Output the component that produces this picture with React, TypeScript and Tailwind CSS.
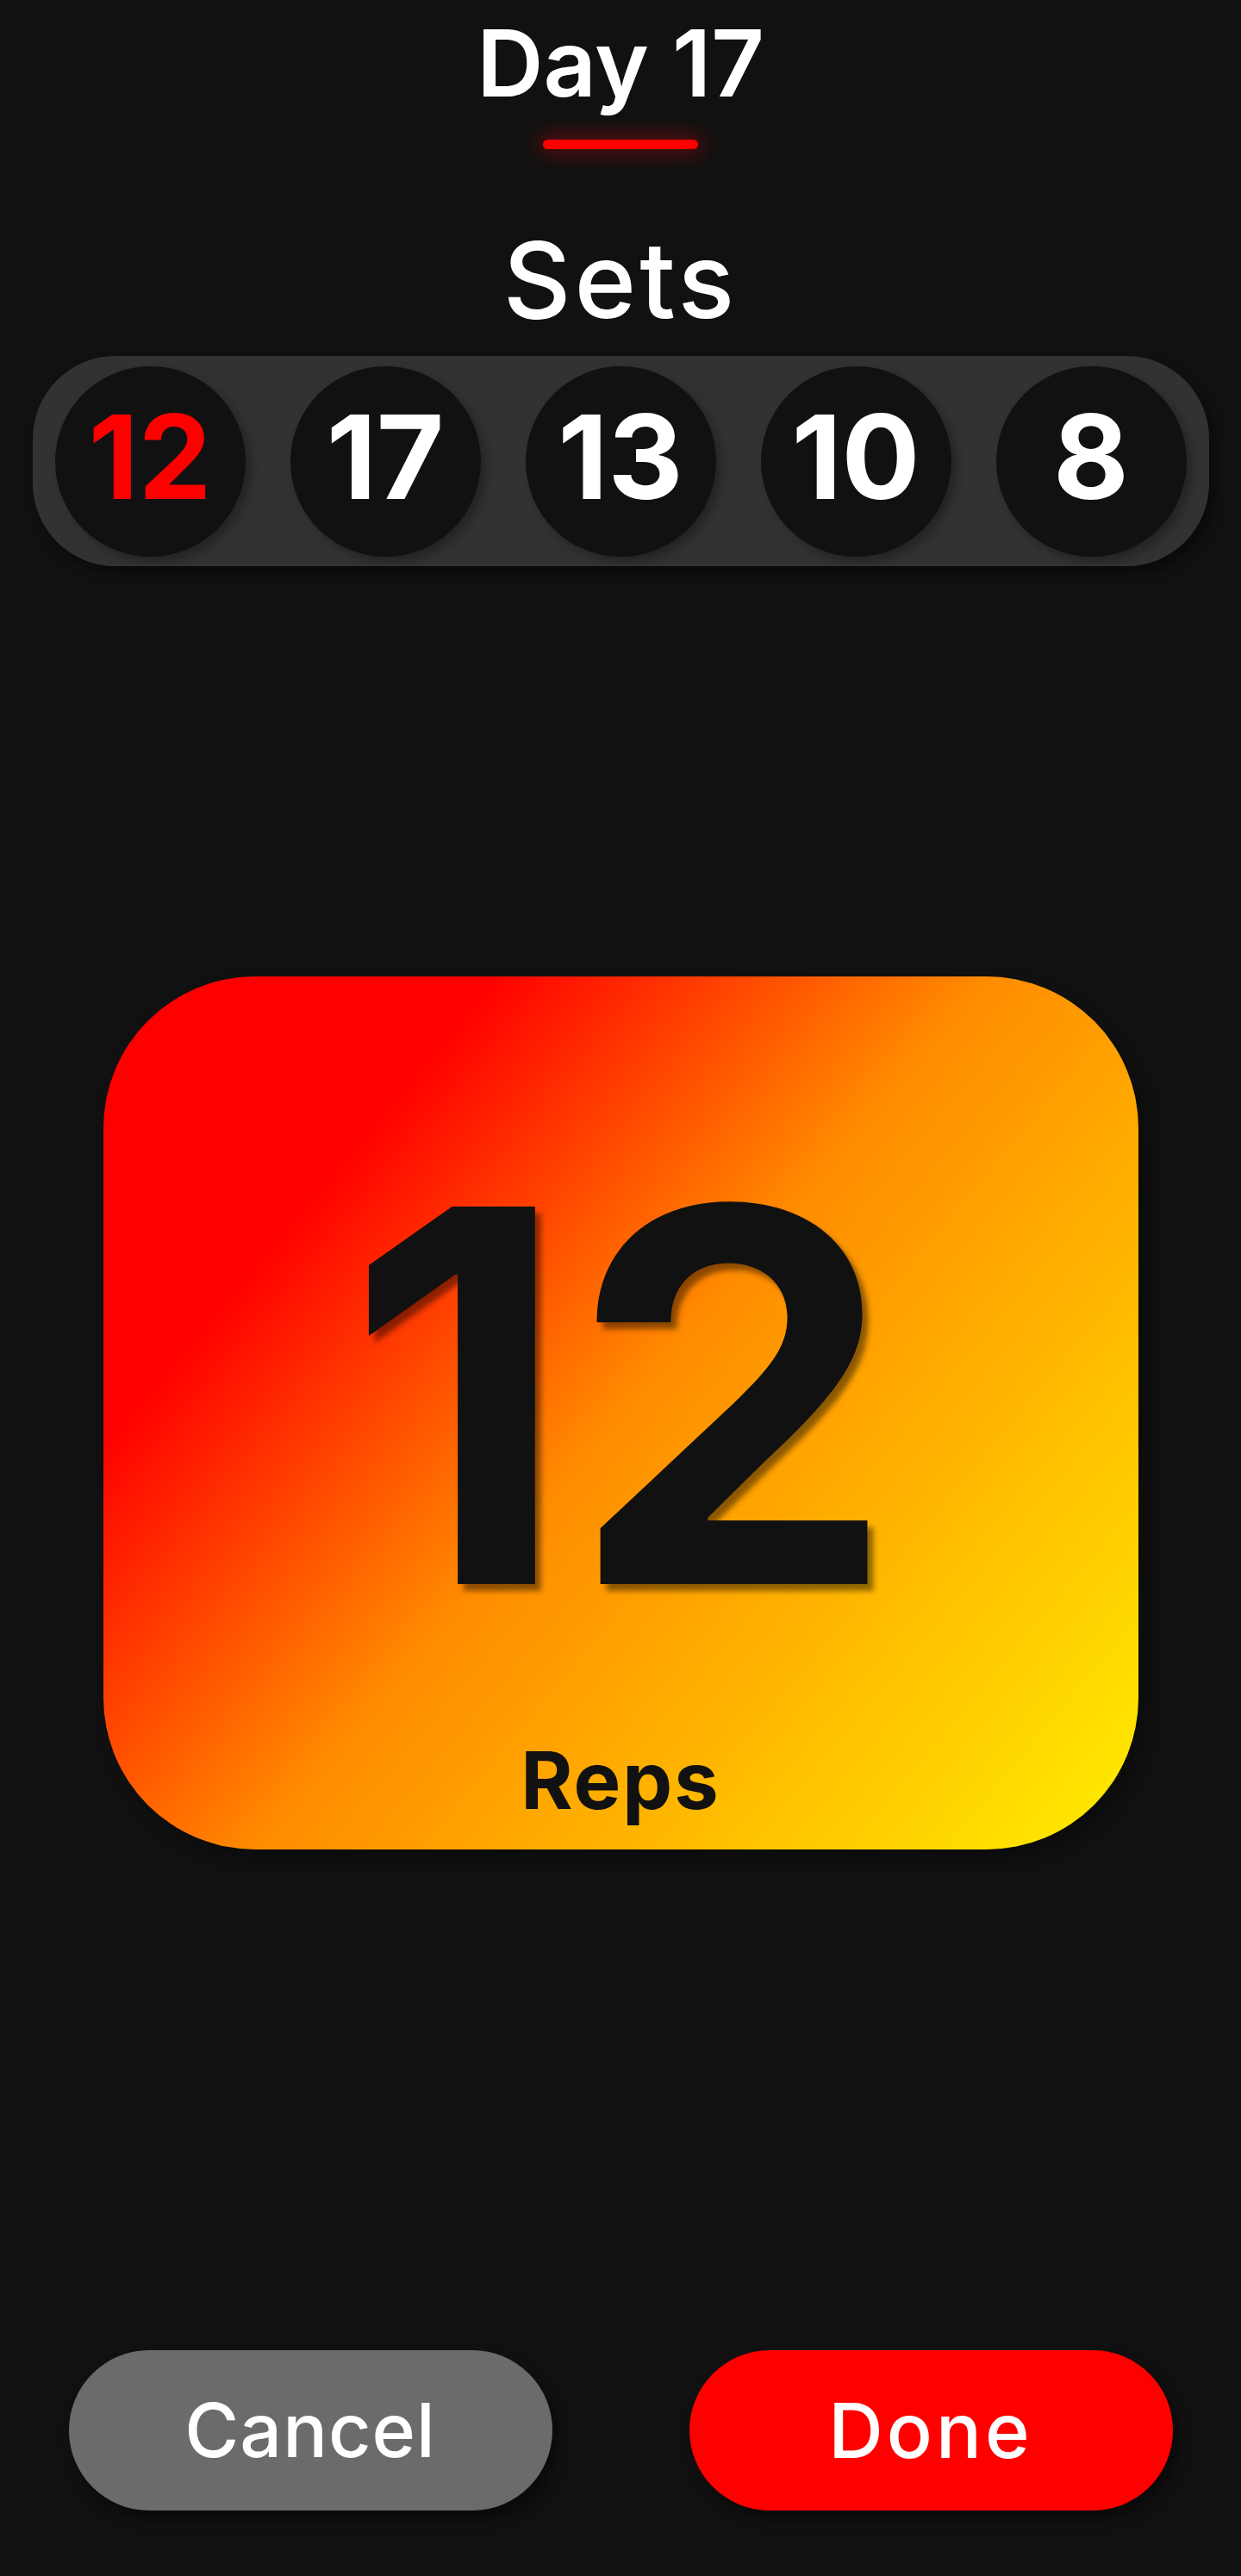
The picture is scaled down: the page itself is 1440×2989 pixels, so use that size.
export default function App() {
  const sets = [12, 17, 13, 10, 8];
  return (
    <div className="min-h-screen w-full bg-[#111111] flex flex-col items-center font-['Inter','Noto_Sans',sans-serif] text-white">
      <h1 className="mt-[20px] text-[107px] leading-none font-semibold">Day 17</h1>
      <div className="mt-[35px] h-[11px] w-[180px] rounded-full bg-[#ff0000] shadow-[0_0_22px_6px_rgba(255,0,0,0.3)]" />
      <h2 className="mt-[91px] text-[122px] leading-none font-medium tracking-[4px]">Sets</h2>
      <div className="mt-[27px] w-[1365px] h-[244px] rounded-[96px] bg-[#323232] flex items-center justify-between px-[26px] shadow-[6px_8px_14px_rgba(0,0,0,0.45)]">
        {sets.map((n, i) => (
          <div
            key={i}
            className={
              "size-[221px] rounded-full bg-[#111111] flex items-center justify-center pb-[9px] text-[135px] leading-none font-bold shadow-[6px_6px_12px_rgba(0,0,0,0.3)] " +
              (i === 0 ? "text-[#ff0000]" : "text-white")
            }
          >
            {n}
          </div>
        ))}
      </div>
      <div className="mt-[476px] w-[1201px] h-[1013px] rounded-[176px] bg-[linear-gradient(130deg,#ff0000_22%,#ff8c00_50%,#ffee00_100%)] flex flex-col items-center shadow-[8px_10px_18px_rgba(0,0,0,0.35)]">
        <div className="mt-[185px] text-[602px] leading-none font-bold text-[#111111] [text-shadow:7px_8px_6px_rgba(0,0,0,0.45)]">12</div>
        <div className="mt-[100px] text-[92px] leading-none font-bold tracking-[2px] text-[#111111]">Reps</div>
      </div>
      <div className="mt-[581px] w-full grid grid-cols-2">
        <div className="flex justify-center">
          <button className="w-[561px] h-[186px] rounded-full bg-[#6b6b6b] text-white text-[86px] leading-none font-medium tracking-[1px] shadow-[6px_10px_16px_rgba(0,0,0,0.45)]">Cancel</button>
        </div>
        <div className="flex justify-center">
          <button className="w-[561px] h-[186px] rounded-full bg-[#ff0000] text-white text-[88px] leading-none font-medium tracking-[4px] shadow-[6px_10px_16px_rgba(0,0,0,0.45)]">Done</button>
        </div>
      </div>
    </div>
  );
}
